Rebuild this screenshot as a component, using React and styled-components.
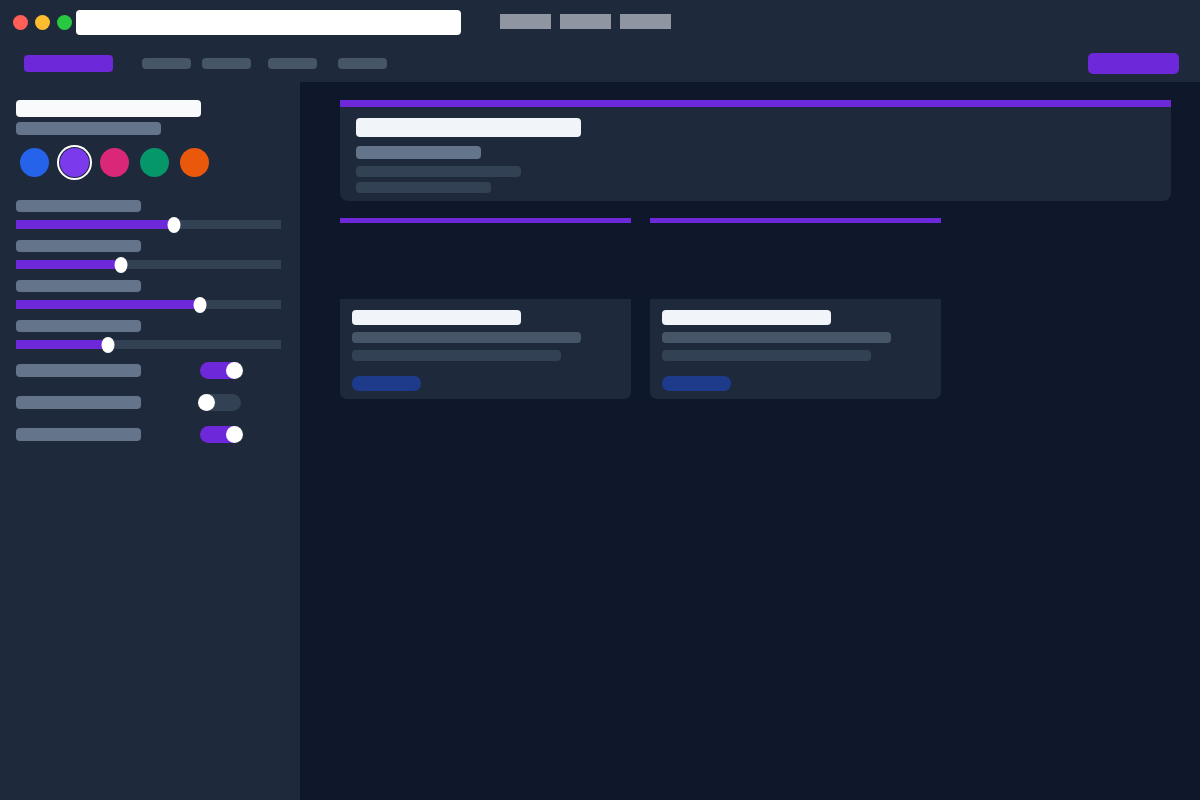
import React from "react";
import styled, { createGlobalStyle } from "styled-components";

const GlobalStyle = createGlobalStyle`
  html, body {
    margin: 0;
    padding: 0;
    background: #0f172a;
    font-family: "Inter", "Liberation Sans", sans-serif;
    overflow: hidden;
  }
  #root {
    height: 800px;
  }
`;

const swatches = ["#2563eb", "#7c3aed", "#db2777", "#059669", "#ea580c"];
const sliders = [60, 40, 70, 35];
const toggles = [true, false, true];
const navPills = [0, 11, 17, 21];
// usable run of the slider, the thumb stops a little short of the track end
const RUN = 263;

const App = () => {
  return (
    <>
      <GlobalStyle />
      <Page>
        <Header>
          <TitleRow>
            <Lights>
              <Light color="#ff5f57" />
              <Light color="#febc2e" />
              <Light color="#28c840" />
            </Lights>
            <AddressBar />
            <Tabs>
              <Tab />
              <Tab />
              <Tab />
            </Tabs>
          </TitleRow>
          <NavRow>
            <Brand />
            <NavLinks>
              {navPills.map((m, i) => (
                <NavPill key={i} offset={m} />
              ))}
            </NavLinks>
            <Spacer />
            <ActionButton />
          </NavRow>
        </Header>
        <Body>
          <Sidebar>
            <SideTitle />
            <SideSubtitle />
            <Swatches>
              {swatches.map((c, i) => (
                <Swatch key={c} color={c} selected={i === 1} />
              ))}
            </Swatches>
            <Sliders>
              {sliders.map((v, i) => (
                <SliderGroup key={i}>
                  <Label />
                  <Track>
                    <Fill style={{ width: `${(v / 100) * RUN}px` }} />
                    <Thumb style={{ left: `${(v / 100) * RUN}px` }} />
                  </Track>
                </SliderGroup>
              ))}
            </Sliders>
            <Toggles>
              {toggles.map((on, i) => (
                <ToggleRow key={i}>
                  <ToggleLabel />
                  <Switch on={on}>
                    <Knob on={on} />
                  </Switch>
                </ToggleRow>
              ))}
            </Toggles>
          </Sidebar>
          <Main>
            <HeroCard>
              <HeroTitle />
              <HeroSub />
              <HeroLine width={165} />
              <HeroLine width={135} gap={5} />
            </HeroCard>
            <Grid>
              {[0, 1].map((i) => (
                <Column key={i}>
                  <Stripe />
                  <Media />
                  <Card>
                    <CardTitle />
                    <CardLine color="#475569" width={229} />
                    <CardLine color="#334155" width={209} />
                    <CardButton />
                  </Card>
                </Column>
              ))}
            </Grid>
          </Main>
        </Body>
      </Page>
    </>
  );
};

export default App;

const Page = styled.div`
  display: flex;
  flex-direction: column;
  width: 1200px;
  height: 800px;
`;

const Header = styled.header`
  background: #1e293b;
  display: flex;
  flex-direction: column;
  height: 82px;
`;

const TitleRow = styled.div`
  display: flex;
  align-items: center;
  height: 45px;
  padding-left: 13px;
`;

const Lights = styled.div`
  display: flex;
  gap: 7px;
`;

const Light = styled.span`
  width: 15px;
  height: 15px;
  border-radius: 50%;
  background: ${(p) => p.color};
`;

const AddressBar = styled.div`
  width: 385px;
  height: 25px;
  margin-left: 4px;
  background: #ffffff;
  border-radius: 4px;
`;

const Tabs = styled.div`
  display: flex;
  align-self: flex-start;
  gap: 9px;
  margin: 14px 0 0 39px;
`;

const Tab = styled.div`
  width: 51px;
  height: 15px;
  background: #8f96a1;
`;

const NavRow = styled.nav`
  display: flex;
  align-items: center;
  height: 37px;
  padding: 0 21px 0 24px;
`;

const Brand = styled.div`
  width: 89px;
  height: 17px;
  background: #6d28d9;
  border-radius: 4px;
`;

const NavLinks = styled.div`
  display: flex;
  margin-left: 29px;
`;

const NavPill = styled.div`
  width: 49px;
  height: 11px;
  margin-left: ${(p) => p.offset}px;
  background: #475569;
  border-radius: 4px;
`;

const Spacer = styled.div`
  flex: 1;
`;

const ActionButton = styled.button`
  width: 91px;
  height: 21px;
  border: none;
  padding: 0;
  background: #6d28d9;
  border-radius: 5px;
`;

const Body = styled.div`
  display: flex;
  flex: 1;
  min-height: 0;
`;

const Sidebar = styled.aside`
  width: 300px;
  background: #1e293b;
  padding: 18px 0 0 16px;
  box-sizing: border-box;
  display: flex;
  flex-direction: column;
`;

const SideTitle = styled.div`
  width: 185px;
  height: 17px;
  background: #f8fafc;
  border-radius: 4px;
`;

const SideSubtitle = styled.div`
  width: 145px;
  height: 13px;
  margin-top: 5px;
  background: #64748b;
  border-radius: 4px;
`;

const Swatches = styled.div`
  display: flex;
  gap: 11px;
  margin-top: 13px;
  padding-left: 4px;
`;

const Swatch = styled.div`
  width: 29px;
  height: 29px;
  border-radius: 50%;
  background: ${(p) => p.color};
  box-shadow: ${(p) =>
    p.selected ? "0 0 0 1px #1e293b, 0 0 0 3px #ffffff" : "none"};
`;

const Sliders = styled.div`
  display: flex;
  flex-direction: column;
  gap: 11px;
  margin-top: 23px;
`;

const SliderGroup = styled.div`
  display: flex;
  flex-direction: column;
  gap: 8px;
`;

const Label = styled.div`
  width: 125px;
  height: 12px;
  background: #64748b;
  border-radius: 4px;
`;

const Track = styled.div`
  position: relative;
  width: 265px;
  height: 9px;
  background: #334155;
`;

const Fill = styled.div`
  height: 100%;
  background: #6d28d9;
`;

const Thumb = styled.div`
  position: absolute;
  top: 50%;
  width: 13px;
  height: 16px;
  border-radius: 50%;
  background: #ffffff;
  transform: translate(-50%, -50%);
`;

const Toggles = styled.div`
  display: flex;
  flex-direction: column;
  gap: 15px;
  margin-top: 13px;
`;

const ToggleRow = styled.div`
  display: flex;
  align-items: center;
  height: 17px;
`;

const ToggleLabel = styled.div`
  width: 125px;
  height: 13px;
  background: #64748b;
  border-radius: 4px;
`;

const Switch = styled.div`
  position: relative;
  width: 41px;
  height: 17px;
  margin-left: 59px;
  border-radius: 9px;
  background: ${(p) => (p.on ? "#6d28d9" : "#334155")};
`;

const Knob = styled.div`
  position: absolute;
  top: 0;
  left: ${(p) => (p.on ? "26px" : "-2px")};
  width: 17px;
  height: 17px;
  border-radius: 50%;
  background: #ffffff;
`;

const Main = styled.main`
  flex: 1;
  background: #0f172a;
  padding: 18px 29px 0 40px;
  display: flex;
  flex-direction: column;
`;

const HeroCard = styled.section`
  display: flex;
  flex-direction: column;
  background: #1e293b;
  border-top: 7px solid #6d28d9;
  border-radius: 0 0 8px 8px;
  padding: 11px 16px 8px;
`;

const HeroTitle = styled.div`
  width: 225px;
  height: 19px;
  background: #f1f5f9;
  border-radius: 4px;
`;

const HeroSub = styled.div`
  width: 125px;
  height: 13px;
  margin-top: 9px;
  background: #64748b;
  border-radius: 4px;
`;

const HeroLine = styled.div`
  width: ${(p) => p.width}px;
  height: 11px;
  margin-top: ${(p) => p.gap || 7}px;
  background: #334155;
  border-radius: 4px;
`;

const Grid = styled.div`
  display: flex;
  gap: 19px;
  margin-top: 17px;
`;

const Column = styled.div`
  display: flex;
  flex-direction: column;
  width: 291px;
`;

const Stripe = styled.div`
  height: 5px;
  background: #6d28d9;
`;

const Media = styled.div`
  height: 76px;
`;

const Card = styled.article`
  display: flex;
  flex-direction: column;
  gap: 7px;
  background: #1e293b;
  border-radius: 0 0 7px 7px;
  padding: 11px 12px 8px;
`;

const CardTitle = styled.div`
  width: 169px;
  height: 15px;
  background: #f1f5f9;
  border-radius: 4px;
`;

const CardLine = styled.div`
  width: ${(p) => p.width}px;
  height: 11px;
  background: ${(p) => p.color};
  border-radius: 4px;
`;

const CardButton = styled.div`
  width: 69px;
  height: 15px;
  margin-top: 8px;
  background: #1e3a8a;
  border-radius: 7px;
`;
